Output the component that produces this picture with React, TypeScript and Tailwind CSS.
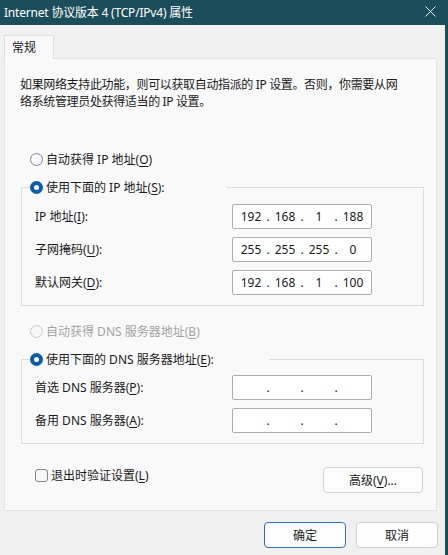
import React from "react"

const font = "font-['Noto_Sans','Noto_Sans_CJK_SC',sans-serif]"

// 单选框：选中 / 未选 / 禁用三种状态
function Radio({ checked, disabled }: { checked?: boolean; disabled?: boolean }) {
  if (checked) {
    return (
      <span className="flex h-[13px] w-[13px] shrink-0 items-center justify-center rounded-full bg-[#0b5cad]">
        <span className="h-[5px] w-[5px] rounded-full bg-white" />
      </span>
    )
  }
  return (
    <span
      className={`h-[13px] w-[13px] shrink-0 rounded-full border bg-[#f7f7f7] ${
        disabled ? "border-[#c8c8c8]" : "border-[#858585]"
      }`}
    />
  )
}

function Key({ k }: { k: string }) {
  return <u className="underline-offset-2">{k}</u>
}

// IP 地址输入框：四段 + 三个点
function IpBox({ parts }: { parts: string[] }) {
  return (
    <div className="flex h-[25px] w-[140px] items-center rounded-[2px] border border-[#adadad] bg-white pl-[3px] text-[12px] text-[#1a1a1a]">
      {parts.map((p, i) => (
        <React.Fragment key={`ip-${i}`}>
          <span className="w-[30px] text-center">{p}</span>
          {i < 3 && <span className="w-[4px] text-center leading-none">.</span>}
        </React.Fragment>
      ))}
    </div>
  )
}

function Row({ label, parts }: { label: React.ReactNode; parts: string[] }) {
  return (
    <div className="flex items-center">
      <span className="w-[210px] pl-[13px]">{label}</span>
      <IpBox parts={parts} />
    </div>
  )
}

export default function App() {
  return (
    <div className={`h-[555px] w-[448px] overflow-hidden bg-[#1c4d5b] text-[12px] leading-[17px] text-[#1a1a1a] ${font}`}>
      {/* 标题栏 */}
      <div className="flex h-[25px] items-center justify-between bg-[#1c4d5b] pl-[4px] pr-[12px] text-[12px] tracking-[-0.2px] text-white">
        <span>Internet 协议版本 4 (TCP/IPv4) 属性</span>
        <svg width="11" height="11" viewBox="0 0 11 11" className="mb-[2px]">
          <path d="M0.5 0.5 L10.5 10.5 M10.5 0.5 L0.5 10.5" stroke="#e8eef0" strokeWidth="1" />
        </svg>
      </div>

      <div className="flex h-[530px] w-[445px] flex-col bg-[#f0f0f0]">
        {/* 选项卡 */}
        <div className="flex pl-[4px] pt-[10px]">
          <div className="relative z-10 -mb-px flex h-[24px] w-[50px] items-center border border-b-0 border-[#dedede] bg-[#f9f9f9] pl-[7px]">
            常规
          </div>
        </div>

        <div className="ml-[4px] flex h-[453px] w-[433px] flex-col border border-[#e3e3e3] bg-[#f9f9f9]">
          <p className="mt-[17px] pl-[15px] tracking-[-0.35px]">
            如果网络支持此功能，则可以获取自动指派的 IP 设置。否则，你需要从网
            <br />
            络系统管理员处获得适当的 IP 设置。
          </p>

          <div className="mt-[41px] flex items-center gap-[3px] pl-[25px]">
            <Radio />
            <span>
              自动获得 IP 地址(<Key k="O" />)
            </span>
          </div>

          <fieldset className="ml-[16px] mt-[11px] w-[403px] border border-[#dcdcdc] pb-[10px] pt-[8px]">
            <legend className="ml-[8px] flex w-[196px] items-center gap-[3px]">
              <Radio checked />
              <span>
                使用下面的 IP 地址(<Key k="S" />):
              </span>
            </legend>
            <div className="flex flex-col gap-[8px]">
              <Row label={<>IP 地址(<Key k="I" />):</>} parts={["192", "168", "1", "188"]} />
              <Row label={<>子网掩码(<Key k="U" />):</>} parts={["255", "255", "255", "0"]} />
              <Row label={<>默认网关(<Key k="D" />):</>} parts={["192", "168", "1", "100"]} />
            </div>
          </fieldset>

          <div className="mt-[17px] flex items-center gap-[3px] pl-[25px] text-[#a3a3a3]">
            <Radio disabled />
            <span>
              自动获得 DNS 服务器地址(<Key k="B" />)
            </span>
          </div>

          <fieldset className="ml-[16px] mt-[11px] w-[403px] border border-[#dcdcdc] pb-[10px] pt-[7px]">
            <legend className="ml-[8px] flex w-[239px] items-center gap-[3px]">
              <Radio checked />
              <span>
                使用下面的 DNS 服务器地址(<Key k="E" />):
              </span>
            </legend>
            <div className="flex flex-col gap-[8px]">
              <Row label={<>首选 DNS 服务器(<Key k="P" />):</>} parts={["", "", "", ""]} />
              <Row label={<>备用 DNS 服务器(<Key k="A" />):</>} parts={["", "", "", ""]} />
            </div>
          </fieldset>

          <div className="mt-[23px] flex items-start justify-between pl-[30px] pr-[13px]">
            <label className="flex items-center gap-[3px]">
              <span className="h-[13px] w-[13px] rounded-[3px] border border-[#858585] bg-[#f7f7f7]" />
              <span>
                退出时验证设置(<Key k="L" />)
              </span>
            </label>
            <button className="flex h-[26px] w-[100px] items-center justify-center rounded-[4px] border border-[#d0d0d0] bg-[#fdfdfd]">
              高级(<Key k="V" />)...
            </button>
          </div>
        </div>

        {/* 确定 / 取消 */}
        <div className="mt-[11px] flex justify-end gap-[10px] pr-[7px]">
          <button className="flex h-[26px] w-[82px] items-center justify-center rounded-[4px] border border-[#2a73c0] bg-[#fdfdfd]">
            确定
          </button>
          <button className="flex h-[26px] w-[82px] items-center justify-center rounded-[4px] border border-[#d0d0d0] bg-[#fdfdfd]">
            取消
          </button>
        </div>
      </div>
    </div>
  )
}
